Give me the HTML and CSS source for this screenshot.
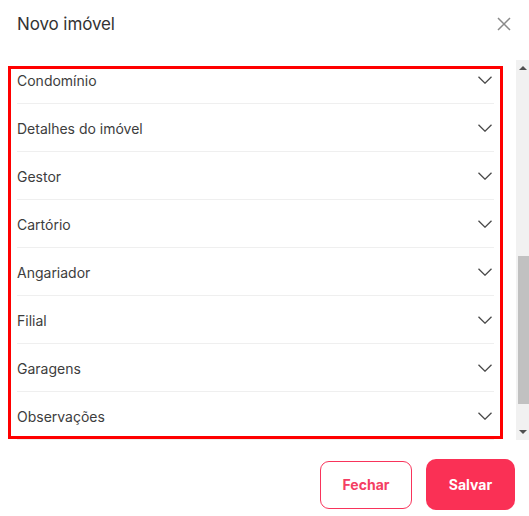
FILE: index.html
```html
<!DOCTYPE html>
<html lang="pt-BR">
<head>
<meta charset="utf-8">
<title>Novo imóvel</title>
<link rel="stylesheet" href="styles.css">
</head>
<body>
<div class="modal">
  <header class="modal-header">
    <h1 class="modal-title">Novo imóvel</h1>
    <button class="close-btn" aria-label="Fechar">
      <svg width="14" height="14" viewBox="0 0 14 14"><path d="M1 1L13 13M13 1L1 13" stroke="#8a8a8a" stroke-width="1.5" fill="none"/></svg>
    </button>
  </header>
  <div class="modal-body">
    <div class="list-viewport">
      <ul class="sections">
        <li class="section"><span>Condomínio</span><svg class="chev" width="14" height="8" viewBox="0 0 14 8"><path d="M0.5 0.7L7 7.2L13.5 0.7" stroke="#4a4a4a" stroke-width="1.3" fill="none"/></svg></li>
        <li class="section"><span>Detalhes do imóvel</span><svg class="chev" width="14" height="8" viewBox="0 0 14 8"><path d="M0.5 0.7L7 7.2L13.5 0.7" stroke="#4a4a4a" stroke-width="1.3" fill="none"/></svg></li>
        <li class="section"><span>Gestor</span><svg class="chev" width="14" height="8" viewBox="0 0 14 8"><path d="M0.5 0.7L7 7.2L13.5 0.7" stroke="#4a4a4a" stroke-width="1.3" fill="none"/></svg></li>
        <li class="section"><span>Cartório</span><svg class="chev" width="14" height="8" viewBox="0 0 14 8"><path d="M0.5 0.7L7 7.2L13.5 0.7" stroke="#4a4a4a" stroke-width="1.3" fill="none"/></svg></li>
        <li class="section"><span>Angariador</span><svg class="chev" width="14" height="8" viewBox="0 0 14 8"><path d="M0.5 0.7L7 7.2L13.5 0.7" stroke="#4a4a4a" stroke-width="1.3" fill="none"/></svg></li>
        <li class="section"><span>Filial</span><svg class="chev" width="14" height="8" viewBox="0 0 14 8"><path d="M0.5 0.7L7 7.2L13.5 0.7" stroke="#4a4a4a" stroke-width="1.3" fill="none"/></svg></li>
        <li class="section"><span>Garagens</span><svg class="chev" width="14" height="8" viewBox="0 0 14 8"><path d="M0.5 0.7L7 7.2L13.5 0.7" stroke="#4a4a4a" stroke-width="1.3" fill="none"/></svg></li>
        <li class="section"><span>Observações</span><svg class="chev" width="14" height="8" viewBox="0 0 14 8"><path d="M0.5 0.7L7 7.2L13.5 0.7" stroke="#4a4a4a" stroke-width="1.3" fill="none"/></svg></li>
      </ul>
    </div>
    <div class="scrollbar" aria-hidden="true">
      <div class="sb-btn"><span class="tri tri-up"></span></div>
      <div class="sb-track"><div class="sb-thumb" style="margin-top:180px;height:148px"></div></div>
      <div class="sb-btn"><span class="tri tri-down"></span></div>
    </div>
    <div class="highlight"></div>
  </div>
  <footer class="modal-footer">
    <button class="btn btn-outline">Fechar</button>
    <button class="btn btn-primary">Salvar</button>
  </footer>
</div>
</body>
</html>
```

FILE: styles.css
```css
* { box-sizing: border-box; }
html, body { margin: 0; padding: 0; background: #fff; }
body {
  font-family: Inter, "Noto Sans", "Liberation Sans", sans-serif;
  color: #333;
  width: 529px;
  height: 516px;
  overflow: hidden;
}
.modal { display: flex; flex-direction: column; width: 529px; height: 516px; }
.modal-header {
  height: 56px;
  flex: none;
  display: flex;
  align-items: center;
  justify-content: space-between;
  padding: 0 18px 8px 17px;
}
.modal-title {
  margin: 0;
  font-size: 17px;
  font-weight: 400;
  color: #333;
  letter-spacing: -0.1px;
}
.close-btn {
  border: 0;
  background: none;
  padding: 0;
  width: 14px;
  height: 14px;
  display: flex;
  cursor: pointer;
}
.modal-body {
  position: relative;
  height: 384px;
  flex: none;
  display: flex;
}
.list-viewport {
  flex: 1;
  overflow: hidden;
}
.sections {
  list-style: none;
  margin: 0;
  padding: 0 22px 0 17px;
}
.section {
  height: 48px;
  border-bottom: 1px solid #efefef;
  display: flex;
  align-items: center;
  justify-content: space-between;
  font-size: 14px;
  color: #3d3d3d;
  padding: 1px 2px 0 0;
}
.chev { display: block; }
.scrollbar {
  width: 13px;
  margin-top: 4px;
  height: 380px;
  background: #f1f1f1;
  display: flex;
  flex-direction: column;
}
.sb-btn {
  height: 16px;
  display: flex;
  align-items: center;
  justify-content: center;
}
.sb-track { flex: 1; }
.sb-thumb { background: #c1c1c1; margin-left: 2px; }
.tri {
  width: 0;
  height: 0;
  border-left: 4px solid transparent;
  border-right: 4px solid transparent;
}
.tri-up { border-bottom: 4px solid #505050; }
.tri-down { border-top: 4px solid #505050; }
.highlight {
  position: absolute;
  left: 8px;
  top: 10px;
  width: 495px;
  height: 373px;
  border: 3px solid #ff0000;
  pointer-events: none;
}
.modal-footer {
  display: flex;
  justify-content: flex-end;
  align-items: center;
  gap: 14px;
  padding: 19px 14px 0 0;
}
.btn {
  font-family: Inter, "Liberation Sans", sans-serif;
  font-size: 14px;
  font-weight: 700;
  cursor: pointer;
}
.btn-outline {
  width: 92px;
  height: 48px;
  border: 1px solid #f8345b;
  border-radius: 9px;
  background: #fff;
  color: #f43e62;
}
.btn-primary {
  width: 89px;
  height: 51px;
  border: 0;
  border-radius: 10px;
  background: #fa3055;
  color: #fff;
}
```
